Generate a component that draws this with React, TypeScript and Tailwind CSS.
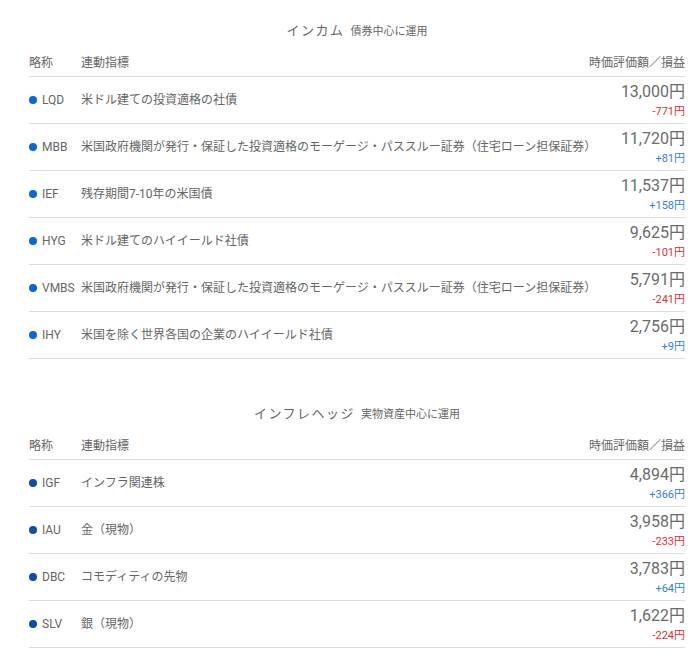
type Fund = { ticker: string; name: string; value: string; diff: string };

const income: Fund[] = [
  { ticker: "LQD", name: "米ドル建ての投資適格の社債", value: "13,000", diff: "-771" },
  { ticker: "MBB", name: "米国政府機関が発行・保証した投資適格のモーゲージ・パススルー証券（住宅ローン担保証券）", value: "11,720", diff: "+81" },
  { ticker: "IEF", name: "残存期間7-10年の米国債", value: "11,537", diff: "+158" },
  { ticker: "HYG", name: "米ドル建てのハイイールド社債", value: "9,625", diff: "-101" },
  { ticker: "VMBS", name: "米国政府機関が発行・保証した投資適格のモーゲージ・パススルー証券（住宅ローン担保証券）", value: "5,791", diff: "-241" },
  { ticker: "IHY", name: "米国を除く世界各国の企業のハイイールド社債", value: "2,756", diff: "+9" },
];

const hedge: Fund[] = [
  { ticker: "IGF", name: "インフラ関連株", value: "4,894", diff: "+366" },
  { ticker: "IAU", name: "金（現物）", value: "3,958", diff: "-233" },
  { ticker: "DBC", name: "コモディティの先物", value: "3,783", diff: "+64" },
  { ticker: "SLV", name: "銀（現物）", value: "1,622", diff: "-224" },
];

function Section({ title, sub, funds, dot }: { title: string; sub: string; funds: Fund[]; dot: string }) {
  return (
    <section className="pt-[23px]">
      <h2 className="flex items-baseline justify-center gap-[6px] leading-[16px] text-[#666]">
        <span className="text-[13px] tracking-[1.5px]">{title}</span>
        <span className="text-[11px]">{sub}</span>
      </h2>
      <div className="flex items-center border-b border-[#dddddd] pt-[16px] pb-[6px] text-[12px] leading-[14px] text-[#666]">
        <span className="w-[52px]">略称</span>
        <span className="flex-1">連動指標</span>
        <span>時価評価額／損益</span>
      </div>
      {funds.map((f) => (
        <div key={f.ticker} className="flex h-[47px] items-center border-b border-[#dddddd] text-[12px] text-[#666]">
          <span className={`mr-[5px] size-[8px] rounded-full ${dot}`} />
          <span className="w-[39px] shrink-0 leading-[14px]">{f.ticker}</span>
          <span className="flex-1 leading-[14px]">{f.name}</span>
          <div className="flex flex-col items-end">
            <span className="text-[16px] leading-[20px] text-[#6b6b6b]">{f.value}円</span>
            <span
              className={`mt-[3px] text-[11px] leading-[14px] ${f.diff.startsWith("-") ? "text-[#d63333]" : "text-[#2f7fe6]"}`}
            >
              {f.diff}円
            </span>
          </div>
        </div>
      ))}
    </section>
  );
}

export default function App() {
  return (
    <div className="min-h-[671px] bg-white pl-[29px] pr-[14px] font-['Roboto','Noto_Sans_CJK_JP',sans-serif]">
      <Section title="インカム" sub="債券中心に運用" funds={income} dot="bg-[#0a66dc]" />
      <div className="mt-[24px]">
        <Section title="インフレヘッジ" sub="実物資産中心に運用" funds={hedge} dot="bg-[#0b4ea8]" />
      </div>
    </div>
  );
}
